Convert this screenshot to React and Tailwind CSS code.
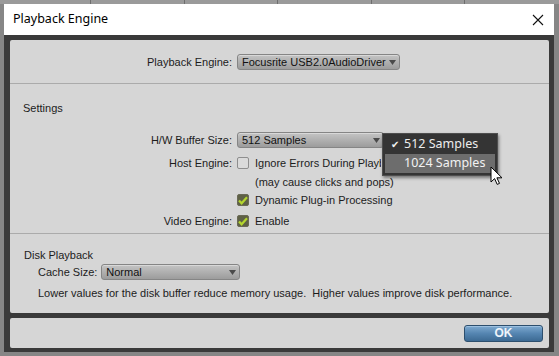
import React from 'react';

const label = "font-['Liberation_Sans',Arial,sans-serif] text-[11px] text-[#1c1c1c] whitespace-nowrap";

function Arrow() {
    return (
        <svg width="7" height="5" viewBox="0 0 7 5" className="shrink-0">
            <path d="M0 0h7L3.5 5z" fill="#4a4a4a" />
        </svg>
    );
}

function Select({ value, className = '' }) {
    return (
        <div className={`h-[16px] flex items-center justify-between pl-[4px] pr-[3px] gap-[3px] rounded-[3px] border border-[#858585] bg-gradient-to-b from-[#c4c4c4] to-[#9c9c9c] shadow-[inset_0_1px_0_#d8d8d8] ${className}`}>
            <span className={`${label} leading-none text-[#111]`}>{value}</span>
            <Arrow />
        </div>
    );
}

function Checkbox({ checked }) {
    if (!checked) {
        return <div className="w-[12px] h-[12px] rounded-[2px] border border-[#8e8e8e] bg-[#dadada] shrink-0" />;
    }
    return (
        <div className="w-[12px] h-[12px] rounded-[2px] border border-[#6a6a55] bg-[#5f6146] shrink-0 flex items-center justify-center">
            <svg width="10" height="9" viewBox="0 0 10 9">
                <path d="M1 4.5l2.6 2.8L9 1.2" fill="none" stroke="#b4d62e" strokeWidth="2.2" />
            </svg>
        </div>
    );
}

function Row({ name, children, className = '' }) {
    return (
        <div className={`flex items-center ${className}`}>
            <div className={`${label} w-[223px] text-right pr-[1px] shrink-0`}>{name}</div>
            <div className="pl-[4px] flex items-center gap-[6px]">{children}</div>
        </div>
    );
}

export default function App() {
    return (
        <div className="w-[559px] h-[356px] bg-[#868686] flex flex-col overflow-hidden relative">
            {/* strip behind the window */}
            <div className="h-[4px] flex bg-[#9a9a9a]">
                <div className="w-[91px] border-r border-[#6e6e6e]" />
                <div className="w-[94px] border-r border-[#6e6e6e]" />
                <div className="w-[93px] border-r border-[#6e6e6e]" />
                <div className="w-[94px] border-r border-[#6e6e6e]" />
                <div className="w-[93px] border-r border-[#6e6e6e]" />
            </div>

            <div className="ml-[4px] w-[550px] h-[348px] flex flex-col">
                {/* title bar */}
                <div className="h-[31px] bg-white flex items-center justify-between pl-[9px] pr-[9px]">
                    <span className="font-['Noto_Sans',sans-serif] text-[12.5px] text-black">Playback Engine</span>
                    <svg width="12" height="12" viewBox="0 0 12 12" className="mr-[1px]">
                        <path d="M1 1l10 10M11 1L1 11" stroke="#111" strokeWidth="1.1" />
                    </svg>
                </div>

                {/* body */}
                <div className="flex-1 bg-[#3a3a3a] pl-[6px] pr-[5px] pt-[5px] pb-[4px] flex flex-col gap-[5px]">
                    <div className="h-[273px] bg-[#d6d6d6] rounded-[2px] flex flex-col">
                        <div className="h-[44px] flex items-center border-b border-[#ababab]">
                            <Row name="Playback Engine:" className="pt-[1px]">
                                <Select value="Focusrite USB2.0AudioDriver" />
                            </Row>
                        </div>

                        <div className="h-[150px] border-b border-[#ababab] flex flex-col">
                            <div className={`${label} pl-[13px] pt-[16px] h-[44px]`}>Settings</div>
                            <Row name="H/W Buffer Size:" className="h-[16px] mt-[4px]">
                                <Select value="512 Samples" className="w-[147px]" />
                            </Row>
                            <Row name="Host Engine:" className="h-[14px] mt-[8px]">
                                <Checkbox />
                                <span className={`${label} w-[126px] overflow-hidden`}>Ignore Errors During Playback/Record</span>
                            </Row>
                            <Row name="" className="h-[14px] mt-[5px]">
                                <span className={`${label} pl-[18px]`}>(may cause clicks and pops)</span>
                            </Row>
                            <Row name="" className="h-[14px] mt-[4px]">
                                <Checkbox checked />
                                <span className={label}>Dynamic Plug-in Processing</span>
                            </Row>
                            <Row name="Video Engine:" className="h-[14px] mt-[7px]">
                                <Checkbox checked />
                                <span className={label}>Enable</span>
                            </Row>
                        </div>

                        <div className="flex-1 flex flex-col pl-[14px]">
                            <div className={`${label} pt-[13px] h-[31px]`}>Disk Playback</div>
                            <div className="flex items-center pl-[14px] gap-[4px] h-[16px] mt-[-1px]">
                                <span className={label}>Cache Size:</span>
                                <Select value="Normal" className="w-[139px]" />
                            </div>
                            <div className={`${label} pl-[14px] mt-[5px] whitespace-pre`}>Lower values for the disk buffer reduce memory usage.  Higher values improve disk performance.</div>
                        </div>
                    </div>

                    <div className="flex-1 bg-[#d6d6d6] rounded-[2px] flex items-center justify-end pr-[6px]">
                        <button className="w-[79px] h-[17px] rounded-[3px] border border-[#2d4f6e] bg-gradient-to-b from-[#7eaad0] via-[#5585b1] to-[#3c6a93] flex items-center justify-center shadow-[inset_0_1px_0_#9cc0e0]">
                            <span className="font-['Liberation_Sans',Arial,sans-serif] text-[12px] font-bold text-[#eef4fa] leading-none">OK</span>
                        </button>
                    </div>
                </div>
            </div>

            {/* open dropdown menu */}
            <div className="absolute left-[382px] top-[133px] w-[116px] h-[43px] bg-[#343434] border border-[#4e4e4e] shadow-[1px_2px_3px_rgba(0,0,0,0.45)] flex flex-col px-[2px] pt-[1px]">
                <div className="h-[19px] flex items-center">
                    <span className="w-[19px] pl-[6px] text-[#f0f0f0] text-[10px] leading-none font-['DejaVu_Sans',sans-serif]">✔</span>
                    <span className="font-['Noto_Sans',sans-serif] text-[12.5px] text-[#ededed]">512 Samples</span>
                </div>
                <div className="h-[19px] flex items-center bg-[#6d6d6d] pl-[19px]">
                    <span className="font-['Noto_Sans',sans-serif] text-[12.5px] text-[#f2f2f2]">1024 Samples</span>
                </div>
            </div>

            {/* mouse pointer */}
            <svg className="absolute left-[490px] top-[166px]" width="13" height="20" viewBox="0 0 13 20">
                <path d="M1 1v15l3.6-3.4 2.6 5.8 2.3-1-2.6-5.6H12z" fill="#fff" stroke="#000" strokeWidth="1" strokeLinejoin="round" />
            </svg>
        </div>
    );
}
